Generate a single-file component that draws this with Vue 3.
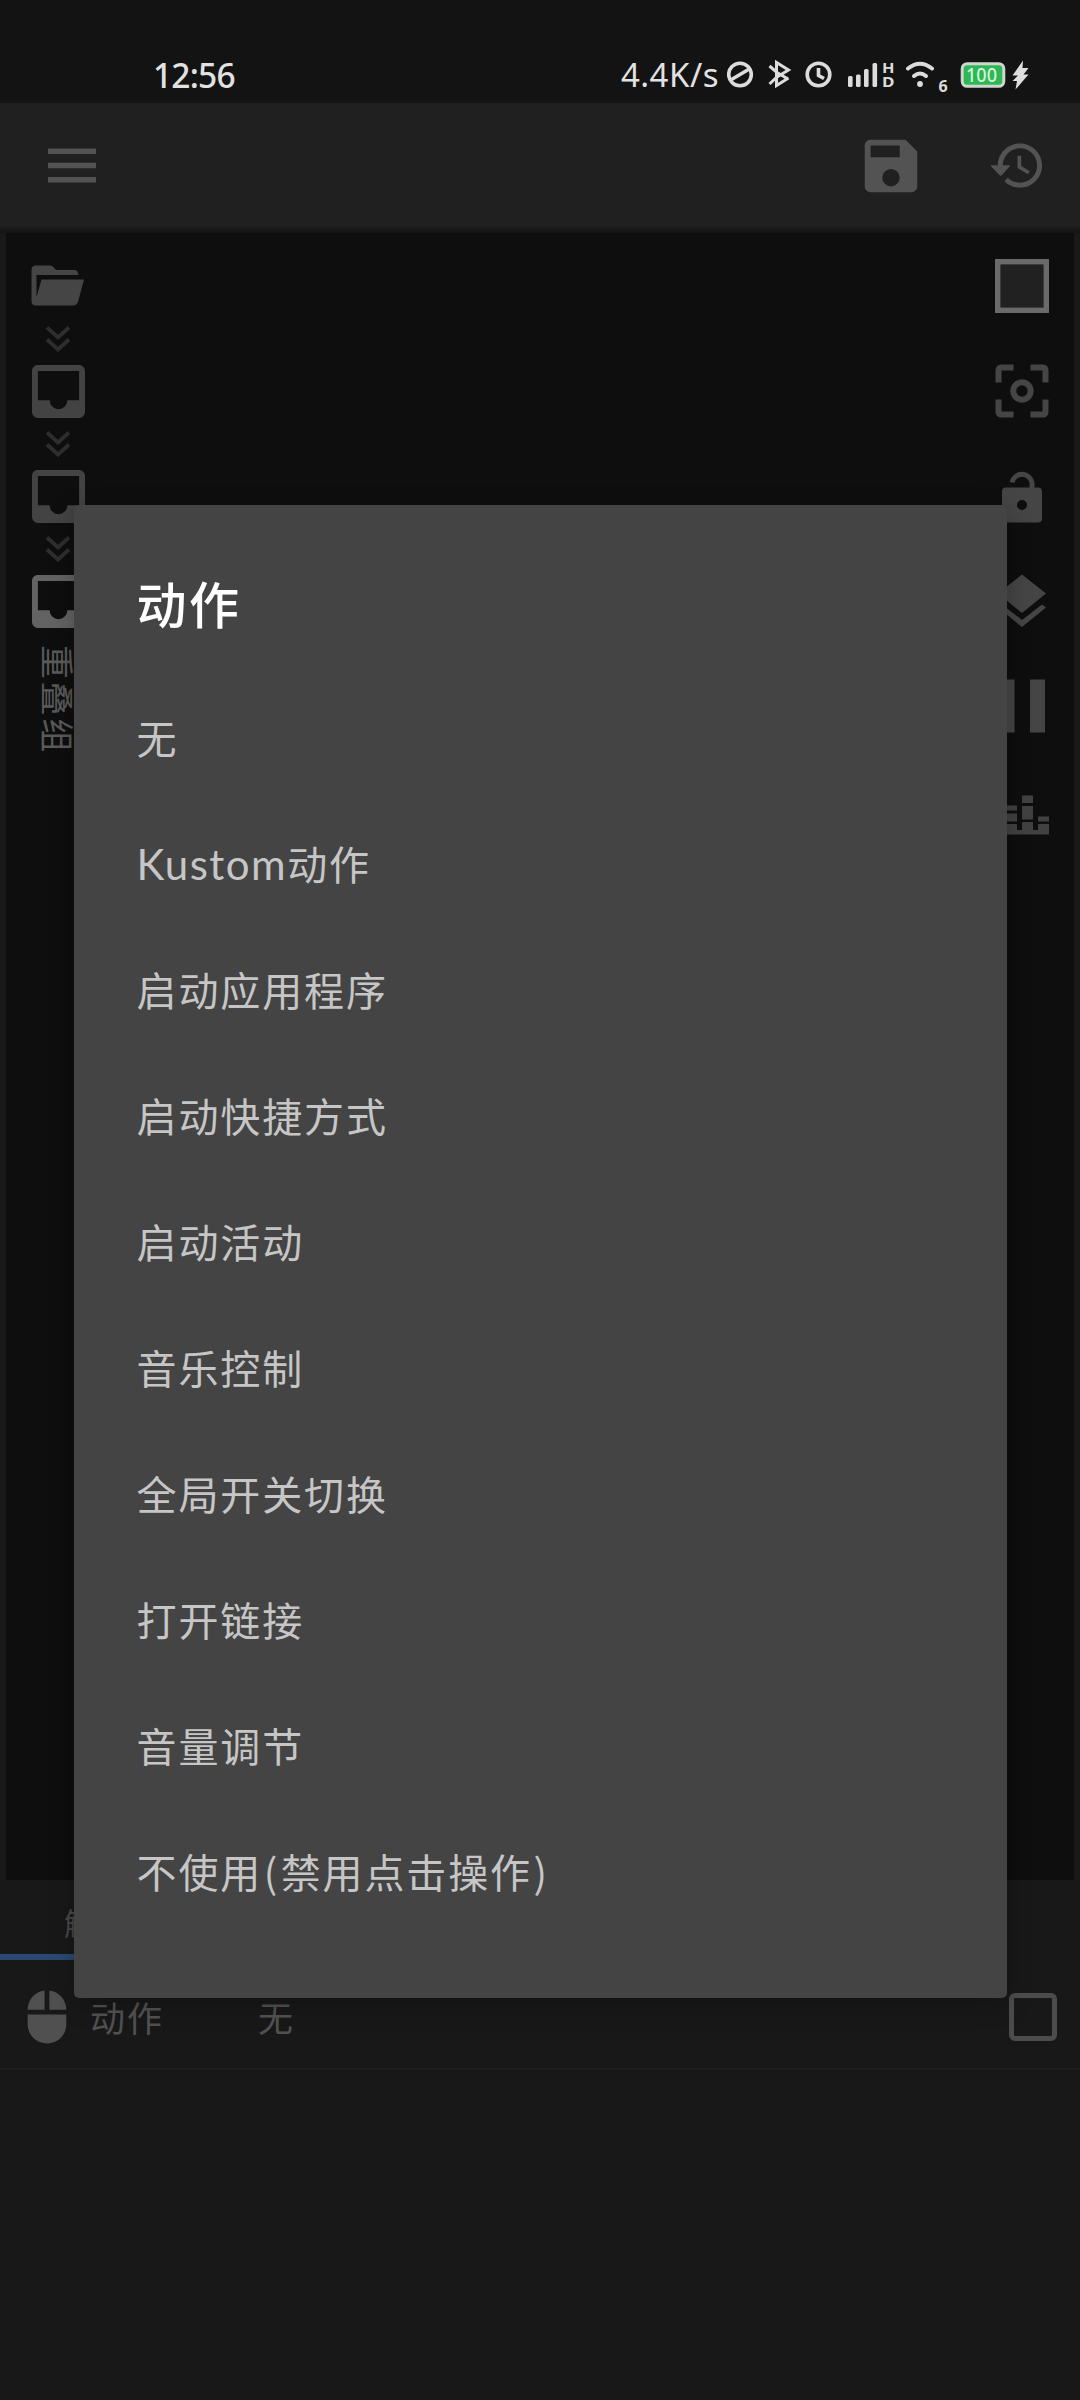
<script setup>
import { ref } from 'vue'

const selected = ref(null)
const checked = ref(false)

const actions = [
  '无',
  'Kustom动作',
  '启动应用程序',
  '启动快捷方式',
  '启动活动',
  '音乐控制',
  '全局开关切换',
  '打开链接',
  '音量调节',
  '不使用(禁用点击操作)',
]

const layers = [
  { id: 'root', active: false },
  { id: 'group', active: false },
  { id: 'overlap', active: true },
]

/**
 * Latin words and brackets get their own spacing
 * @param {string} text
 */
function split(text) {
  return text.split(/([A-Za-z]+|[()])/).filter(Boolean)
}

/**
 * @param {string} part
 */
function partClass(part) {
  if (/^[A-Za-z]/.test(part)) return 'dialog__latin'
  return /^[()]/.test(part) ? 'dialog__bracket' : ''
}
</script>

<template>
  <div class="screen">
    <div class="status">
      <span class="status__time">12:56</span>
      <div class="status__right">
        <span class="status__speed">4.4K/s</span>
        <svg class="status__icons" width="304" height="44" viewBox="0 0 304 44" fill="none">
          <g stroke="#dcdcdc" stroke-width="3.6">
            <circle cx="13" cy="17.5" r="11.3" />
            <path d="M4.5 22.5L21.5 12.5" />
            <circle cx="91.5" cy="17.5" r="11.3" />
            <path d="M91.5 11V18.5L97 21.5" />
          </g>
          <path d="M42.500 9L50 15.500L61 22M42.500 27L50 20L61.500 13L49.500 5.500V28.500L61.500 21" stroke="#dcdcdc" stroke-width="3" />
          <g fill="#dcdcdc">
            <rect x="121" y="19" width="4.6" height="11" rx="1.5" />
            <rect x="129" y="17.5" width="4.6" height="12.5" rx="1.5" />
            <rect x="137" y="12" width="4.6" height="18" rx="1.5" />
            <rect x="145.5" y="6" width="4.6" height="24" rx="1.5" />
            <text x="155" y="15.500" class="status__hd" textLength="12.500" lengthAdjust="spacingAndGlyphs">H</text>
            <text x="155" y="30" class="status__hd" textLength="12.500" lengthAdjust="spacingAndGlyphs">D</text>
            <circle cx="193" cy="27" r="2.9" />
            <text x="211.500" y="35" class="status__six">6</text>
          </g>
          <path d="M181 11.5Q193 2 205 11.5" stroke="#dcdcdc" stroke-width="4" stroke-linecap="round" />
          <path d="M187 19Q193 14 199 19" stroke="#dcdcdc" stroke-width="4" stroke-linecap="round" />
          <rect x="235.2" y="6.7" width="41.6" height="22.6" rx="5" fill="#2db755" stroke="#cfd6cf" stroke-width="3" />
          <text x="239" y="25" class="status__battery" textLength="31" lengthAdjust="spacingAndGlyphs">100</text>
          <path d="M296 3.500L285.500 18.500H291L285.500 24H290L288.500 32.500L301.500 17.500H296.500L301.500 11H295.500Z" fill="#dedede" />
        </svg>
      </div>
    </div>

    <header class="bar">
      <svg class="bar__menu" width="48" height="36" viewBox="0 0 48 36" fill="#535353">
        <path d="M0 0.500H48V6H0ZM0 14.800H48V20.300H0ZM0 29H48V34.500H0Z" />
      </svg>
      <div class="bar__tools">
        <svg width="70" height="70" viewBox="0 0 24 24" fill="#535353">
          <path d="M15,9H5V5H15M12,19A3,3 0 0,1 9,16A3,3 0 0,1 12,13A3,3 0 0,1 15,16A3,3 0 0,1 12,19M17,3H5C3.89,3 3,3.9 3,5V19A2,2 0 0,0 5,21H19A2,2 0 0,0 21,19V7L17,3Z" />
        </svg>
        <svg width="59" height="59" viewBox="0 0 24 24" fill="#535353">
          <path d="M13 3c-4.970 0-9 4.030-9 9H1l3.890 3.890.7.140L9 12H6c0-3.870 3.130-7 7-7s7 3.130 7 7-3.130 7-7 7c-1.930 0-3.680-.790-4.940-2.060l-1.420 1.420C8.270 19.990 10.510 21 13 21c4.970 0 9-4.030 9-9s-4.030-9-9-9zm-1 5v5l4.280 2.540.720-1.210-3.500-2.080V8H12z" />
          <path d="M1 12H9L5 16.300Z" />
        </svg>
      </div>
    </header>

    <main class="canvas">
      <nav class="rail rail--left">
        <svg class="rail__icon" width="54" height="54" viewBox="0 0 54 54" fill="#454545">
          <path d="M5 6.500H19Q21 6.500 22.500 8L25 11H43Q47 11 47.500 16H5.500V38L10.500 20.500H53L47.500 41Q46.500 46.500 41.500 46.500H5Q0.500 46.500 0.500 42V11Q0.500 6.500 5 6.500Z" />
        </svg>
        <template v-for="layer in layers" :key="layer.id">
          <svg class="rail__chevron" width="26" height="26" viewBox="0 0 26 26" fill="none" stroke="#2e2e2e" stroke-width="3.8">
            <path d="M2 1.500L13 11.500L24 1.500M2 13.500L13 23.500L24 13.500" />
          </svg>
          <svg class="rail__icon" width="53" height="53" viewBox="3 3 18 18" :fill="layer.active ? '#636363' : '#434343'">
            <path d="M19,15H15A3,3 0 0,1 12,18A3,3 0 0,1 9,15H5V5H19M19,3H5C3.89,3 3,3.9 3,5V19A2,2 0 0,0 5,21H19A2,2 0 0,0 21,19V5A2,2 0 0,0 19,3Z" />
          </svg>
        </template>
        <span class="rail__label">重叠组</span>
      </nav>

      <nav class="rail rail--right">
        <svg class="rail__icon" width="54" height="54" viewBox="0 0 54 54">
          <rect x="2.7" y="2.7" width="48.6" height="48.6" fill="#212121" stroke="#6a6a6a" stroke-width="5.4" />
        </svg>
        <svg class="rail__icon" width="54" height="54" viewBox="0 0 54 54" fill="none" stroke="#454545" stroke-width="6">
          <path d="M3.500 18.500V6.500Q3.500 3.500 6.500 3.500H18.500M35.500 3.500H47.500Q50.500 3.500 50.500 6.500V18.500M50.500 35.500V47.500Q50.500 50.500 47.500 50.500H35.500M18.500 50.500H6.500Q3.500 50.500 3.500 47.500V35.500" />
          <circle cx="27" cy="27" r="8.7" />
        </svg>
        <svg class="rail__icon" width="54" height="54" viewBox="0 0 54 54" fill="#454545">
          <path fill-rule="evenodd" d="M11 18.500H43Q47 18.500 47 22.500V49.500Q47 53.500 43 53.500H11Q7 53.500 7 49.500V22.500Q7 18.500 11 18.500ZM27 31A5 5 0 1 0 27 41A5 5 0 1 0 27 31Z" />
          <path d="M17 13.500A10.200 10.200 0 0 1 37 13.500V20" fill="none" stroke="#454545" stroke-width="5" />
        </svg>
        <svg class="rail__icon" width="54" height="54" viewBox="0 0 54 54" fill="#454545">
          <path d="M27 0.500L51 19.500L27 39L3 19.500ZM3 33.500L7 30.500L27 46L47 30.500L51 33.500L27 53Z" />
        </svg>
        <svg class="rail__icon" width="54" height="54" viewBox="0 0 54 54" fill="#454545">
          <path d="M4.500 0.500H19.500V53.500H4.500ZM35 0.500H50V53.500H35Z" />
        </svg>
        <svg class="rail__icon" width="54" height="54" viewBox="0 0 54 54" fill="#414141">
          <path d="M0.500 46H54V50.500H0.500ZM11 21.500H22V26.500H11ZM11 29.500H22V37.500H11ZM11 40H22V47H11ZM27 11.500H38V19H27ZM27 22H38V35.500H27ZM27 38H38V47H27ZM43 32.500H54V37.500H43ZM43 40H54V47H43Z" />
        </svg>
      </nav>
    </main>

    <div class="tabs">
      <button type="button" class="tabs__item tabs__item--active">触摸</button>
    </div>

    <div class="pref">
      <svg class="pref__icon" width="58" height="58" viewBox="0 0 24 24" fill="#505050">
        <path d="M11,1.070C7.050,1.560 4,4.920 4,9H11M4,15A8,8 0 0,0 12,23A8,8 0 0,0 20,15V11H4M13,1.070V9H20C20,4.920 16.940,1.560 13,1.070Z" />
      </svg>
      <span class="pref__name">动作</span>
      <span class="pref__value">无</span>
      <span class="pref__check" :class="{ 'pref__check--on': checked }" @click="checked = !checked"></span>
    </div>

    <div class="dialog" role="dialog" aria-labelledby="dialog-title">
      <h2 id="dialog-title" class="dialog__title">动作</h2>
      <ul class="dialog__list">
        <li v-for="(action, index) in actions" :key="action" class="dialog__item" @click="selected = index">
          <span v-for="part in split(action)" :key="part" :class="partClass(part)">{{ part }}</span>
        </li>
      </ul>
    </div>
  </div>
</template>

<style>
body {
  background: #181818;
}
</style>

<style scoped>
.screen {
  position: relative;
  display: flex;
  flex-direction: column;
  width: 1080px;
  height: 2400px;
  overflow: hidden;
  background: #181818;
  font-family: 'Noto Sans', 'Noto Sans CJK SC', sans-serif;
}

.status {
  display: flex;
  justify-content: space-between;
  height: 103px;
  padding: 0 49px 0 153px;
  box-sizing: border-box;
  background: #131313;
  color: #e2e2e2;
}

.status__time {
  padding-top: 53px;
  font-size: 33.500px;
  line-height: 44px;
  font-weight: 500;
  letter-spacing: -0.800px;
}

.status__right {
  display: flex;
}

.status__speed {
  padding-top: 53px;
  margin-right: 8px;
  font-size: 33px;
  line-height: 44px;
  letter-spacing: 0.500px;
}

.status__icons {
  margin-top: 57px;
}

.status__hd {
  font: 700 14px 'Noto Sans', sans-serif;
}

.status__six {
  font: 700 16px 'Noto Sans', sans-serif;
}

.status__battery {
  font: 500 20px 'Noto Sans', sans-serif;
  fill: #d5f5dc;
}

.bar {
  display: flex;
  align-items: center;
  justify-content: space-between;
  height: 130px;
  padding: 0 33px 5px 48px;
  box-sizing: border-box;
  background: linear-gradient(#202020 0 122px, #131313 130px);
}

.bar__tools {
  display: flex;
  align-items: center;
  gap: 62px;
}

.canvas {
  display: flex;
  justify-content: space-between;
  height: 1647px;
  padding: 26px 25px 0;
  border: solid #191919;
  border-width: 0 6px;
  box-sizing: border-box;
  background: #0e0e0e;
}

.rail {
  display: flex;
  flex-direction: column;
  align-items: center;
}

.rail--right {
  gap: 51px;
}

.rail__icon {
  flex-shrink: 0;
}

.rail__chevron {
  margin: 13px 0;
}

.rail__label {
  margin-top: 17px;
  writing-mode: vertical-rl;
  text-orientation: sideways;
  font-family: 'Noto Sans CJK SC', sans-serif;
  font-size: 34px;
  line-height: 40px;
  letter-spacing: 2.600px;
  color: #5a5a5a;
}

.tabs {
  display: flex;
  height: 80px;
}

.tabs__item {
  width: 190px;
  padding: 9px 0 0;
  border: none;
  border-bottom: 6px solid transparent;
  background: none;
  font-family: 'Noto Sans CJK SC', sans-serif;
  font-size: 31px;
  line-height: 40px;
  color: #484848;
}

.tabs__item--active {
  border-bottom-color: #294872;
}

.pref {
  display: flex;
  align-items: center;
  height: 110px;
  padding: 5px 23px 0 18px;
  border-bottom: 2px solid #1e1e1e;
  box-sizing: border-box;
  font-family: 'Noto Sans CJK SC', sans-serif;
  font-size: 35px;
  line-height: 50px;
  letter-spacing: 2px;
  color: #515151;
}

.pref__name {
  width: 168px;
  margin-left: 14px;
}

.pref__check {
  width: 48px;
  height: 48px;
  margin-left: auto;
  border: 5px solid #4c4c4c;
  border-radius: 6px;
  box-sizing: border-box;
}

.pref__check--on {
  background: #4c4c4c;
}

.dialog {
  position: absolute;
  top: 505px;
  left: 73.500px;
  width: 933px;
  height: 1493px;
  padding: 57px 63px 0;
  border-radius: 5px;
  box-sizing: border-box;
  background: #444;
  box-shadow: 0 6px 24px rgba(0, 0, 0, 0.25);
  font-family: 'Noto Sans CJK SC', sans-serif;
}

.dialog__title {
  margin: 0;
  font-size: 50px;
  line-height: 80px;
  font-weight: 500;
  letter-spacing: 2.500px;
  color: #fff;
}

.dialog__list {
  margin: 32px 0 0;
  padding: 0;
  list-style: none;
}

.dialog__item {
  height: 126px;
  font-size: 40px;
  line-height: 126px;
  letter-spacing: 1.900px;
  color: #c6c6c6;
}

.dialog__latin {
  font-family: Lato, sans-serif;
  font-size: 42px;
  letter-spacing: 1.500px;
}

.dialog__bracket {
  padding: 0 1.500px;
}
</style>
